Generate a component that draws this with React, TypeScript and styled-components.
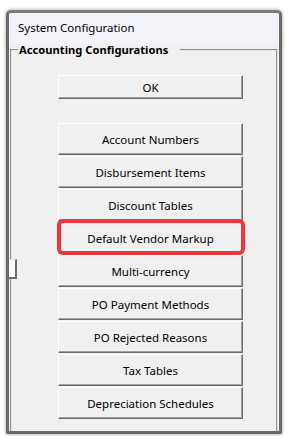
import React from "react";
import styled, { createGlobalStyle } from "styled-components";

const GlobalStyle = createGlobalStyle`
  html, body {
    margin: 0;
    padding: 0;
    background: #ffffff;
  }
  body {
    font-family: "Noto Sans", "Open Sans", Arial, sans-serif;
    color: #000000;
  }
`;

const Page = styled.div`
  padding: 10px 6px 2px 6px;
  width: 288px;
  box-sizing: border-box;
`;

const Window = styled.div`
  position: relative;
  box-sizing: border-box;
  width: 276px;
  height: 424px;
  border: 3px solid #6a6a6a;
  border-top-color: #7a7a7a;
  border-radius: 5px 5px 2px 2px;
  background: #f0f0f0;
  box-shadow: 0 0 3px 1px rgba(0, 0, 0, 0.25);
  display: flex;
  flex-direction: column;
`;

const TitleBar = styled.div`
  box-sizing: border-box;
  height: 31px;
  padding: 0 0 3px 9px;
  display: flex;
  align-items: center;
  background: #f3f4f9;
  font-size: 11.5px;
  border-radius: 3px 3px 0 0;
`;

const Group = styled.fieldset`
  flex: 1;
  margin: 0 1px 0 1px;
  padding: 19px 0 0 0;
  border: 2px groove #e4e4e4;
  border-bottom: none;
  min-width: 0;
`;

const Legend = styled.legend`
  margin-left: 6px;
  padding: 0 12px 0 1px;
  font-size: 11.2px;
  font-weight: 700;
  line-height: 12px;
`;

const Stack = styled.div`
  display: flex;
  flex-direction: column;
  gap: 1px;
  width: 185px;
  margin-left: 46px;
`;

const WinButton = styled.div<{ $tall?: boolean; $highlight?: boolean }>`
  position: relative;
  box-sizing: border-box;
  width: 185px;
  height: ${(p) => (p.$tall ? "32px" : "24px")};
  display: flex;
  align-items: center;
  justify-content: center;
  background: #f0f0f0;
  border-top: 1px solid #ffffff;
  border-left: 1px solid #ffffff;
  border-right: 1px solid #6b6b6b;
  border-bottom: 1px solid #6b6b6b;
  box-shadow: inset -1px -1px 0 #a0a0a0;
  font-size: 11.5px;
  color: #000;

  ${(p) =>
    p.$highlight &&
    `
    &::after {
      content: "";
      position: absolute;
      top: -4px;
      left: -2px;
      right: -3px;
      bottom: -2px;
      border: 4px solid #e9393f;
      border-radius: 6px;
    }
  `}
`;

const OkRow = styled.div`
  margin: 0 0 24px 46px;
`;

const SliderThumb = styled.div`
  position: absolute;
  left: 0;
  top: 246px;
  width: 8px;
  height: 20px;
  box-sizing: border-box;
  background: #fbfbfb;
  border-top: 1px solid #e0e0e0;
  border-right: 2px solid #6d6d6d;
  border-bottom: 2px solid #6d6d6d;
`;

const items = [
  "Account Numbers",
  "Disbursement Items",
  "Discount Tables",
  "Default Vendor Markup",
  "Multi-currency",
  "PO Payment Methods",
  "PO Rejected Reasons",
  "Tax Tables",
  "Depreciation Schedules",
];

export default function App() {
  return (
    <>
      <GlobalStyle />
      <Page>
        <Window>
          <TitleBar>System Configuration</TitleBar>
          <Group>
            <Legend>Accounting Configurations</Legend>
            <OkRow>
              <WinButton>OK</WinButton>
            </OkRow>
            <Stack>
              {items.map((label) => (
                <WinButton key={label} $tall $highlight={label === "Default Vendor Markup"}>
                  {label}
                </WinButton>
              ))}
            </Stack>
          </Group>
          <SliderThumb />
        </Window>
      </Page>
    </>
  );
}
